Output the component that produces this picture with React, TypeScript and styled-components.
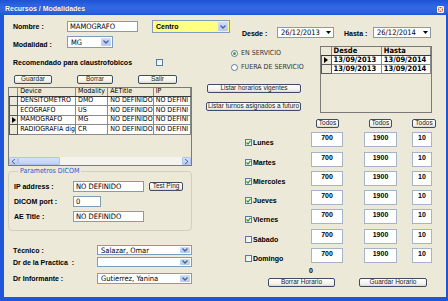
import React from 'react';
import styled, { createGlobalStyle } from 'styled-components';

const ui = `"Liberation Sans", Arial, sans-serif`;
const narrow = `"Liberation Sans Narrow", "DejaVu Sans Condensed", "Liberation Sans", sans-serif`;

const GlobalStyle = createGlobalStyle`
  html, body { margin: 0; padding: 0; background: #ECE9D8; }
  body { width: 448px; height: 301px; overflow: hidden; font-family: ${ui}; }
  * { box-sizing: border-box; }
`;

const Window = styled.div`
  width: 448px;
  height: 301px;
  display: flex;
  flex-direction: column;
  background: #1E55DA;
`;

const TitleBar = styled.div`
  height: 15px;
  flex: none;
  display: flex;
  align-items: flex-end;
  justify-content: space-between;
  padding: 0 4px 2px 5px;
  background: linear-gradient(#1D52D6 0%, #3169E2 45%, #2C63DD 80%, #1F55D6 100%);
`;

const TitleText = styled.span`
  font: bold 7px ${ui};
  color: #fff;
  line-height: 9px;
  text-shadow: 0 0 1px #0a2c8a;
`;

const CloseButton = styled.span`
  width: 7px;
  height: 7px;
  border: 1px solid #fff;
  border-radius: 1px;
  background: #D9552F;
  display: flex;
  align-items: center;
  justify-content: center;
`;

const Body = styled.div`
  flex: 1;
  margin: 0 2px 4px 4px;
  background: #ECE9D8;
  display: flex;
  padding: 5px 0 0 4px;
`;

const Column = styled.div<{ $w?: number }>`
  width: ${p => (p.$w ? `${p.$w}px` : 'auto')};
  flex: ${p => (p.$w ? 'none' : '1')};
  display: flex;
  flex-direction: column;
`;

const Row = styled.div<{ $mt?: number; $pl?: number; $h?: number; $top?: boolean }>`
  display: flex;
  align-items: ${p => (p.$top ? 'flex-start' : 'center')};
  margin-top: ${p => p.$mt ?? 0}px;
  padding-left: ${p => p.$pl ?? 0}px;
  height: ${p => (p.$h ? `${p.$h}px` : 'auto')};
`;

const Label = styled.span<{ $w?: number; $dy?: number }>`
  width: ${p => (p.$w ? `${p.$w}px` : 'auto')};
  flex: none;
  font: bold 7px ${ui};
  color: #000;
  white-space: nowrap;
  position: relative;
  top: ${p => p.$dy ?? 0}px;
`;

const TextBox = styled.input<{ $w: number; $h?: number }>`
  width: ${p => p.$w}px;
  height: ${p => p.$h ?? 11}px;
  flex: none;
  margin: 0;
  padding: 0 0 0 2px;
  border: 1px solid #7F9DB9;
  background: #fff;
  font: 7.5px ${narrow};
  color: #000;
  outline: none;
`;

const Combo = styled.div<{ $w: number; $h: number; $bg?: string; $bold?: boolean }>`
  width: ${p => p.$w}px;
  height: ${p => p.$h}px;
  flex: none;
  display: flex;
  align-items: stretch;
  border: 1px solid #7F9DB9;
  background: ${p => p.$bg ?? '#fff'};
  font: ${p => (p.$bold ? `bold 7px ${ui}` : `7.5px ${narrow}`)};
  color: #000;
`;

const ComboText = styled.span`
  flex: 1;
  padding-left: 3px;
  display: flex;
  align-items: center;
  white-space: nowrap;
  overflow: hidden;
`;

const ComboArrow = styled.span`
  width: 10px;
  margin: 1px;
  border-radius: 1px;
  background: linear-gradient(#CFDCFC, #B5C9F7);
  display: flex;
  align-items: center;
  justify-content: center;
`;

const DateBox = styled.div<{ $w: number }>`
  width: ${p => p.$w}px;
  height: 11px;
  flex: none;
  display: flex;
  align-items: stretch;
  border: 1px solid #7F9DB9;
  background: #fff;
  font: 7.5px ${narrow};
`;

const DateArrow = styled.span`
  width: 10px;
  display: flex;
  align-items: center;
  justify-content: center;
`;

const Button = styled.button<{ $w: number; $h?: number; $ml?: number }>`
  width: ${p => p.$w}px;
  height: ${p => p.$h ?? 9}px;
  flex: none;
  margin: 0 0 0 ${p => p.$ml ?? 0}px;
  padding: 0;
  border: 1px solid #3E4C66;
  border-radius: 2px;
  background: linear-gradient(#FFFFFF, #F3F2EC 70%, #DCD8CD);
  font: 6.5px ${ui};
  color: #222;
  line-height: 1;
  display: flex;
  align-items: center;
  justify-content: center;
  white-space: nowrap;
`;

const CheckBox = styled.span<{ $size?: number }>`
  width: ${p => p.$size ?? 7}px;
  height: ${p => p.$size ?? 7}px;
  flex: none;
  border: 1px solid #5B7AA3;
  background: linear-gradient(135deg, #E8E8E2, #fff);
  display: flex;
  align-items: center;
  justify-content: center;
`;

const RadioDot = styled.span<{ $on?: boolean }>`
  width: 7px;
  height: 7px;
  flex: none;
  border-radius: 50%;
  border: 1px solid #5B7AA3;
  background: #fff;
  display: flex;
  align-items: center;
  justify-content: center;
  &::after {
    content: '';
    width: 3px;
    height: 3px;
    border-radius: 50%;
    background: ${p => (p.$on ? '#3DAA36' : 'transparent')};
  }
`;

const RadioLabel = styled.span`
  font: 7px ${narrow};
  color: #333;
  margin-left: 3px;
`;

/* data grids */
const GridFrame = styled.div<{ $w: number; $h: number }>`
  width: ${p => p.$w}px;
  height: ${p => p.$h}px;
  flex: none;
  border: 1px solid #7A7A7A;
  background: #ECE9D8;
  display: flex;
  flex-direction: column;
  overflow: hidden;
`;

const GridBody = styled.div`
  flex: 1;
  overflow: hidden;
`;

const Table = styled.table<{ $font?: string }>`
  border-collapse: collapse;
  table-layout: fixed;
  font: ${p => p.$font ?? `7px ${narrow}`};
  color: #000;
`;

const Th = styled.th<{ $w: number; $bold?: boolean }>`
  width: ${p => p.$w}px;
  height: 8px;
  padding: 0 0 0 2px;
  background: #ECE9D8;
  border-right: 1px solid #8A8A8A;
  border-bottom: 1px solid #3A3A3A;
  font-weight: ${p => (p.$bold ? 'bold' : 'normal')};
  text-align: left;
  white-space: nowrap;
  overflow: hidden;
  line-height: 7px;
`;

const Td = styled.td<{ $h?: number }>`
  height: ${p => p.$h ?? 9.5}px;
  padding: 0 0 0 2px;
  background: #fff;
  border: 1px solid #8A8A8A;
  border-top: none;
  white-space: nowrap;
  overflow: hidden;
  text-overflow: clip;
  line-height: 7px;
`;

const RowHead = styled.td<{ $h?: number }>`
  height: ${p => p.$h ?? 9.5}px;
  padding: 0;
  background: #ECE9D8;
  border: 1px solid #5A5A5A;
  border-top: none;
  text-align: center;
  line-height: 0;
`;

const ScrollBar = styled.div`
  height: 9px;
  flex: none;
  display: flex;
  background: #F4F3EE;
  border-top: 1px solid #ECE9D8;
`;

const ScrollBtn = styled.span`
  width: 9px;
  background: linear-gradient(#D6E1FD, #B9CCF7);
  border: 1px solid #AFC3EE;
  border-radius: 1px;
  display: flex;
  align-items: center;
  justify-content: center;
`;

const ScrollThumb = styled.span`
  width: 42px;
  background: linear-gradient(#D6E1FD, #BED0F9);
  border: 1px solid #AFC3EE;
  border-radius: 1px;
`;

const ScrollTrack = styled.span`
  flex: 1;
`;

const GroupBox = styled.fieldset`
  width: 184px;
  height: 64px;
  margin: 1px 0 0 0;
  padding: 6px 0 0 5px;
  border: 1px solid #D0D0BF;
  border-radius: 4px;
  display: flex;
  flex-direction: column;
  gap: 4px;
`;

const Legend = styled.legend`
  font: 7px ${narrow};
  color: #1D5AD0;
  padding: 0 2px;
  margin-left: 4px;
`;

/* schedule */
const Schedule = styled.div`
  display: grid;
  grid-template-columns: 107px 53px 48px 24px;
  grid-template-rows: 9px;
  grid-auto-rows: 15px;
  row-gap: 4.3px;
  margin-top: 6px;
`;

const DayCell = styled.div`
  display: flex;
  align-items: center;
  padding: 6px 0 0 41px;
`;

const DayName = styled.span`
  font: bold 7px ${ui};
  color: #000;
  margin-left: 1px;
`;

const TimeBox = styled.div<{ $w: number }>`
  width: ${p => p.$w}px;
  height: 15px;
  border: 1px solid #A4B5C8;
  background: #fff;
  font: bold 7px ${ui};
  line-height: 8px;
  text-align: center;
  padding-top: 1px;
  color: #000;
`;

const ZeroText = styled.span`
  font: bold 7px ${ui};
  padding-left: 105px;
  margin-top: 4px;
  line-height: 8px;
`;

const Chevron = () => (
  <svg width="6" height="4" viewBox="0 0 6 4">
    <path d="M0.5 0.5 L3 3 L5.5 0.5" stroke="#4D6185" strokeWidth="1.3" fill="none" />
  </svg>
);

const BlackTriangle = () => (
  <svg width="5" height="3" viewBox="0 0 5 3">
    <path d="M0 0 H5 L2.5 3 Z" fill="#000" />
  </svg>
);

const Tick = () => (
  <svg width="5" height="5" viewBox="0 0 5 5">
    <path d="M0.5 2.5 L2 4 L4.5 0.8" stroke="#21A121" strokeWidth="1.2" fill="none" />
  </svg>
);

const Pointer = () => (
  <svg width="4" height="6" viewBox="0 0 4 6">
    <path d="M0 0 L4 3 L0 6 Z" fill="#000" />
  </svg>
);

const ComboBox: React.FC<{ w: number; h: number; text: string; bg?: string; bold?: boolean }> = ({ w, h, text, bg, bold }) => (
  <Combo $w={w} $h={h} $bg={bg} $bold={bold}>
    <ComboText>{text}</ComboText>
    <ComboArrow><Chevron /></ComboArrow>
  </Combo>
);

const DatePicker: React.FC<{ w: number; text: string }> = ({ w, text }) => (
  <DateBox $w={w}>
    <ComboText>{text}</ComboText>
    <DateArrow><BlackTriangle /></DateArrow>
  </DateBox>
);

const devices = [
  ['DENSITOMETRO', 'DMO'],
  ['ECOGRAFO', 'US'],
  ['MAMOGRAFO', 'MG'],
  ['RADIOGRAFIA dig', 'CR'],
];

const days = [
  { name: 'Lunes', on: true },
  { name: 'Martes', on: true },
  { name: 'Miercoles', on: true },
  { name: 'Jueves', on: true },
  { name: 'Viernes', on: true },
  { name: 'Sábado', on: false },
  { name: 'Domingo', on: false },
];

export default function App() {
  return (
    <Window>
      <GlobalStyle />
      <TitleBar>
        <TitleText>Recursos / Modalidades</TitleText>
        <CloseButton>
          <svg width="5" height="5" viewBox="0 0 5 5">
            <path d="M0.5 0.5 L4.5 4.5 M4.5 0.5 L0.5 4.5" stroke="#fff" strokeWidth="1.1" />
          </svg>
        </CloseButton>
      </TitleBar>
      <Body>
        <Column $w={196}>
          <Row $pl={5} $h={13}>
            <Label $w={54}>Nombre :</Label>
            <TextBox $w={71} readOnly value="MAMOGRAFO" />
            <Row $pl={14}>
              <ComboBox w={78} h={13} text="Centro" bg="#FFFF80" bold />
            </Row>
          </Row>
          <Row $pl={5} $mt={3} $h={12}>
            <Label $w={54} $dy={2}>Modalidad :</Label>
            <ComboBox w={46} h={12} text="MG" />
          </Row>
          <Row $pl={5} $mt={10} $h={8}>
            <Label $w={143}>Recomendado para claustrofobicos</Label>
            <CheckBox />
          </Row>
          <Row $mt={9} $h={9}>
            <Button $w={38} $ml={6}>Guardar</Button>
            <Button $w={36} $ml={25}>Borrar</Button>
            <Button $w={39} $ml={25}>Salir</Button>
          </Row>
          <Row $mt={3}>
            <GridFrame $w={184} $h={79}>
              <GridBody>
                <Table>
                  <thead>
                    <tr>
                      <Th $w={13} />
                      <Th $w={56}>Device</Th>
                      <Th $w={36}>Modality</Th>
                      <Th $w={42}>AETitle</Th>
                      <Th $w={40}>IP</Th>
                    </tr>
                  </thead>
                  <tbody>
                    {devices.map(([dev, mod]) => (
                      <tr key={dev}>
                        <RowHead>{dev === 'MAMOGRAFO' && <Pointer />}</RowHead>
                        <Td>{dev}</Td>
                        <Td>{mod}</Td>
                        <Td>NO DEFINIDO</Td>
                        <Td>NO DEFINI</Td>
                      </tr>
                    ))}
                  </tbody>
                </Table>
              </GridBody>
              <ScrollBar>
                <ScrollBtn>
                  <svg width="3" height="5" viewBox="0 0 3 5"><path d="M3 0 L0 2.5 L3 5" stroke="#4D6185" fill="none" /></svg>
                </ScrollBtn>
                <ScrollThumb />
                <ScrollTrack />
                <ScrollBtn>
                  <svg width="3" height="5" viewBox="0 0 3 5"><path d="M0 0 L3 2.5 L0 5" stroke="#4D6185" fill="none" /></svg>
                </ScrollBtn>
              </ScrollBar>
            </GridFrame>
          </Row>
          <GroupBox>
            <Legend>Parametros DICOM</Legend>
            <Row $h={11}>
              <Label $w={59}>IP address :</Label>
              <TextBox $w={71} readOnly value="NO DEFINIDO" />
              <Button $w={34} $ml={5}>Test Ping</Button>
            </Row>
            <Row $h={11}>
              <Label $w={59}>DICOM port :</Label>
              <TextBox $w={28} readOnly value="0" />
            </Row>
            <Row $h={11}>
              <Label $w={59}>AE Title :</Label>
              <TextBox $w={71} readOnly value="NO DEFINIDO" />
            </Row>
          </GroupBox>
          <Row $pl={5} $mt={14} $h={10}>
            <Label $w={84}>Técnico :</Label>
            <ComboBox w={95} h={10} text="Salazar, Omar" />
          </Row>
          <Row $pl={5} $mt={2} $h={10}>
            <Label $w={84}>Dr de la Practica &nbsp;:</Label>
            <ComboBox w={95} h={10} text="" />
          </Row>
          <Row $pl={5} $mt={6} $h={11}>
            <Label $w={84}>Dr Informante :</Label>
            <ComboBox w={95} h={11} text="Gutierrez, Yanina" />
          </Row>
        </Column>

        <Column>
          <Row $mt={7} $pl={38} $h={11}>
            <Label $w={35} $dy={1}>Desde :</Label>
            <DatePicker w={57} text="26/12/2013" />
            <Row $pl={10}>
              <Label $w={29} $dy={1}>Hasta :</Label>
              <DatePicker w={58} text="26/12/2014" />
            </Row>
          </Row>
          <Row $mt={8} $top>
            <Column $w={116}>
              <Row $pl={27} $mt={3} $h={8}>
                <RadioDot $on />
                <RadioLabel>EN SERVICIO</RadioLabel>
              </Row>
              <Row $pl={27} $mt={6} $h={8}>
                <RadioDot />
                <RadioLabel>FUERA DE SERVICIO</RadioLabel>
              </Row>
              <Row $mt={13}>
                <Button $w={94} $ml={3}>Listar horarios vigentes</Button>
              </Row>
              <Row $mt={9}>
                <Button $w={95} $ml={2}>Listar turnos asignados a futuro</Button>
              </Row>
            </Column>
            <GridFrame $w={112} $h={67}>
              <Table $font={`bold 7.5px ${narrow}`}>
                <thead>
                  <tr>
                    <Th $w={9} />
                    <Th $w={47} $bold>Desde</Th>
                    <Th $w={46} $bold>Hasta</Th>
                  </tr>
                </thead>
                <tbody>
                  {[true, false].map((sel, i) => (
                    <tr key={i}>
                      <RowHead $h={9}>{sel && <Pointer />}</RowHead>
                      <Td $h={9}>13/09/2013</Td>
                      <Td $h={9}>13/09/2014</Td>
                    </tr>
                  ))}
                </tbody>
              </Table>
            </GridFrame>
          </Row>
          <Schedule>
            <span />
            <Button $w={23} $ml={5}>Todos</Button>
            <Button $w={23} $ml={5}>Todos</Button>
            <Button $w={24}>Todos</Button>
            {days.map(d => (
              <React.Fragment key={d.name}>
                <DayCell>
                  <CheckBox>{d.on && <Tick />}</CheckBox>
                  <DayName>{d.name}</DayName>
                </DayCell>
                <TimeBox $w={32}>700</TimeBox>
                <TimeBox $w={33}>1900</TimeBox>
                <TimeBox $w={20}>10</TimeBox>
              </React.Fragment>
            ))}
          </Schedule>
          <ZeroText>0</ZeroText>
          <Row $pl={64} $mt={3}>
            <Button $w={67}>Borrar Horario</Button>
            <Button $w={68} $ml={24}>Guardar Horario</Button>
          </Row>
        </Column>
      </Body>
    </Window>
  );
}
